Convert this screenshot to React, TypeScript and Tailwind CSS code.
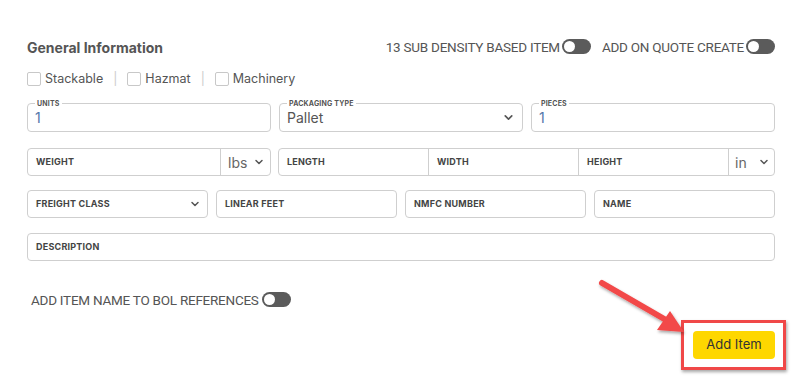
import { ChevronDown } from "lucide-react"

function Toggle() {
  return (
    <span className="inline-flex items-center w-[29px] h-[15px] rounded-full bg-[#5b5b5b] px-[2px]">
      <span className="w-[11px] h-[11px] rounded-full bg-white" />
    </span>
  )
}

function Check({ label }: { label: string }) {
  return (
    <label className="flex items-center gap-[4px]">
      <span className="w-[14px] h-[14px] border border-[#c8c8c8] rounded-[2px] bg-white" />
      <span>{label}</span>
    </label>
  )
}

function Legend({ label, value, select }: { label: string; value: string; select?: boolean }) {
  return (
    <fieldset className="border border-[#cfcfcf] rounded-[4px] h-[32px] px-[7px] pb-[3px] flex items-center">
      <legend className="px-[2px] text-[7px] font-bold tracking-wide text-[#555] leading-[7px]">{label}</legend>
      <span className={"flex-1 text-[14px] leading-[16px] " + (select ? "text-[#555]" : "text-[#5577aa]")}>{value}</span>
      {select && <ChevronDown className="w-[13px] h-[13px] text-[#555]" strokeWidth={3} />}
    </fieldset>
  )
}

function Field({ label, className }: { label: string; className?: string }) {
  return (
    <div className={"h-[28px] border border-[#cfcfcf] rounded-[4px] flex items-center px-[8px] text-[9px] font-bold tracking-wide text-[#444] " + (className ?? "")}>
      {label}
    </div>
  )
}

export default function App() {
  return (
    <div className="relative w-[803px] h-[387px] bg-white pl-[27px] pr-[28px] pt-[38px] text-[#555]" style={{ fontFamily: "Inter, 'Noto Sans', sans-serif" }}>
      <div className="flex items-center justify-between h-[18px]">
        <h2 className="text-[14px] font-bold text-[#555]">General Information</h2>
        <div className="flex items-center text-[13.5px] tracking-[-0.25px] text-[#555]" style={{ fontFamily: "Roboto, sans-serif" }}>
          <span>13 SUB DENSITY BASED ITEM</span>
          <span className="ml-[2px]"><Toggle /></span>
          <span className="ml-[11px]">ADD ON QUOTE CREATE</span>
          <span className="ml-[2px]"><Toggle /></span>
        </div>
      </div>

      <div className="flex items-center mt-[14px] h-[18px] text-[12.5px] text-[#555]">
        <Check label="Stackable" />
        <span className="mx-[10px] text-[#ccc]">|</span>
        <Check label="Hazmat" />
        <span className="mx-[10px] text-[#ccc]">|</span>
        <Check label="Machinery" />
      </div>

      <div className="grid grid-cols-3 gap-[8px] mt-[12px]">
        <Legend label="UNITS" value="1" />
        <Legend label="PACKAGING TYPE" value="Pallet" select />
        <Legend label="PIECES" value="1" />
      </div>

      <div className="flex gap-[7px] mt-[16px] h-[28px]">
        <div className="w-[244px] flex border border-[#cfcfcf] rounded-[4px]">
          <div className="flex-1 flex items-center px-[8px] text-[9px] font-bold tracking-wide text-[#444]">WEIGHT</div>
          <div className="w-[50px] border-l border-[#cfcfcf] flex items-center justify-between pl-[7px] pr-[5px] text-[14px] text-[#666]">
            <span>lbs</span>
            <ChevronDown className="w-[12px] h-[12px] text-[#555]" strokeWidth={3} />
          </div>
        </div>
        <div className="flex-1 flex border border-[#cfcfcf] rounded-[4px]">
          <div className="w-[150px] flex items-center px-[8px] text-[9px] font-bold tracking-wide text-[#444] border-r border-[#cfcfcf]">LENGTH</div>
          <div className="w-[150px] flex items-center px-[8px] text-[9px] font-bold tracking-wide text-[#444] border-r border-[#cfcfcf]">WIDTH</div>
          <div className="w-[150px] flex items-center px-[8px] text-[9px] font-bold tracking-wide text-[#444] border-r border-[#cfcfcf]">HEIGHT</div>
          <div className="flex-1 flex items-center justify-between pl-[6px] pr-[4px] text-[14px] text-[#666]">
            <span>in</span>
            <ChevronDown className="w-[12px] h-[12px] text-[#555]" strokeWidth={3} />
          </div>
        </div>
      </div>

      <div className="grid grid-cols-4 gap-[8px] mt-[14px]">
        <div className="h-[28px] border border-[#cfcfcf] rounded-[4px] flex items-center justify-between pl-[8px] pr-[6px] text-[9px] font-bold tracking-wide text-[#444]">
          <span>FREIGHT CLASS</span>
          <ChevronDown className="w-[12px] h-[12px] text-[#555]" strokeWidth={3} />
        </div>
        <Field label="LINEAR FEET" />
        <Field label="NMFC NUMBER" />
        <Field label="NAME" />
      </div>

      <Field label="DESCRIPTION" className="mt-[15px]" />

      <div className="flex items-center mt-[30px] ml-[4px] h-[18px] text-[13.5px] tracking-[-0.25px] text-[#555]" style={{ fontFamily: "Roboto, sans-serif" }}>
        <span>ADD ITEM NAME TO BOL REFERENCES</span>
        <span className="ml-[3px]"><Toggle /></span>
      </div>

      <div className="flex justify-end mt-[22px]">
        <button className="w-[82px] h-[28px] rounded-[4px] bg-[#fed700] text-[13px] text-[#333]">Add Item</button>
      </div>

      <div className="absolute left-[681px] top-[320px] w-[105px] h-[50px] border-[3px] border-[#f04848] shadow-[1px_2px_3px_rgba(0,0,0,0.35)]" />
      <svg className="absolute left-0 top-0 pointer-events-none" width="803" height="387">
        <defs>
          <filter id="sh" x="-20%" y="-20%" width="140%" height="140%">
            <feDropShadow dx="1" dy="2" stdDeviation="1.5" floodColor="#000" floodOpacity="0.35" />
          </filter>
        </defs>
        <g filter="url(#sh)">
          <line x1="602" y1="283" x2="666" y2="320" stroke="#f24848" strokeWidth="6" strokeLinecap="round" />
          <polygon points="684,332 657,330 670,311" fill="#f24848" />
        </g>
      </svg>
    </div>
  )
}
